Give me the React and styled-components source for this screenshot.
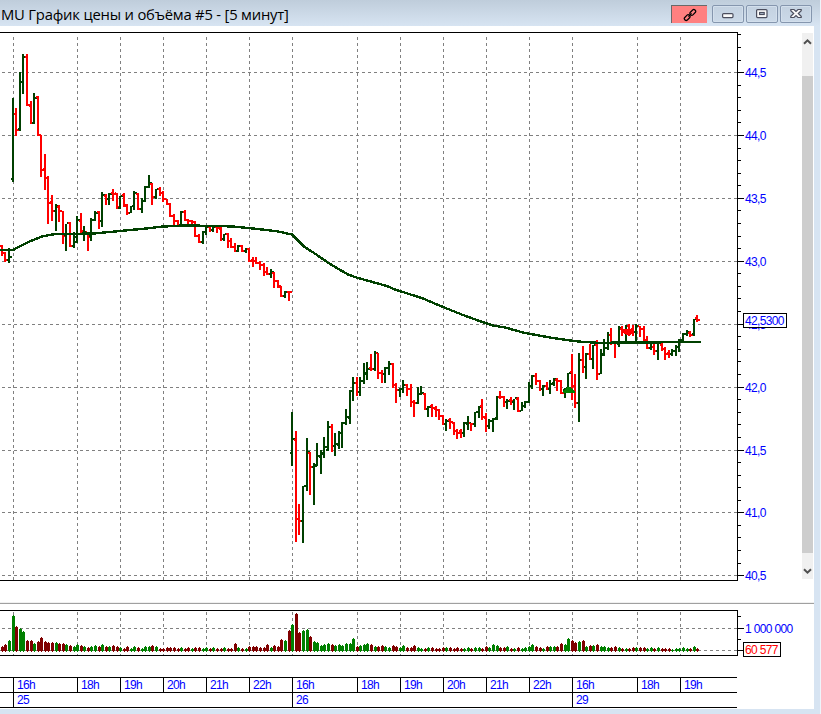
import styled, { createGlobalStyle } from "styled-components";

const UP = "#004000";
const DOWN = "#ff0000";
const STEP = 3.585;

// each session: [x of the first bar, bars as "high low open close"]
const sessions = [
  {
    x: 1.35,
    bars: `245 256 246 253,252 262 253 260,248 263 260 257`,
    volume: `r6 r8 g12`,
  },
  {
    x: 12.1,
    bars: `98 182 179 114,108 136 114 130,72 131 129 82,54 94 82 57,54 106 57 105,101 124 106 123,93 124 123 98,
96 136 97 135,135 177 135 170,154 190 169 178,176 224 178 203,195 221 202 211,204 231 211 206,205 222 207 211,
211 244 211 236,224 251 235 223,222 247 223 246,232 248 246 237,216 243 242 220,213 233 221 231,226 241 233 232,
232 251 232 237,218 241 236 220,211 221 220 213,211 229 212 221,192 227 221 195,194 205 196 199,193 205 199 194,
189 201 193 194,193 209 193 207,196 209 208 196,193 207 195 205,204 215 206 213,206 213 213 206,191 210 206 193,
193 210 194 209,198 213 209 201,186 202 201 187,175 188 187 183,183 205 184 197,189 199 197 189,187 196 189 193,
191 202 193 199,199 205 199 204,203 217 204 216,214 225 216 221,220 226 221 225,211 226 225 212,210 221 212 220,
219 226 220 221,220 227 221 222,221 237 222 236,234 243 236 242,231 244 242 232,226 235 232 227,226 232 227 230,
227 232 230 227,226 233 227 228,227 241 229 239,234 241 239 234,233 248 234 241,238 248 241 247,243 252 247 251,
245 252 251 246,245 252 246 251,248 253 251 249,248 262 249 261,257 267 260 261,257 264 261 263,261 270 263 265,
263 276 265 272,267 275 272 274,269 278 274 272,272 288 273 281,280 288 281 286,286 297 287 296,291 298 296 292,
291 301 292 292`,
    volume: `g37 r26 g24 g21 r12 r12 g9 r11 r15 r11 r10 r10 g10 r9 r9 g8 r7 g6 g8 r7 g6 r5 g6 g7 r6 g8 r6 g6 r7 r6
g5 r4 r6 g4 g6 r5 g4 g6 g6 r7 g6 r4 r4 r5 r5 r5 r4 g5 r4 r5 g4 r5 r5 g4 g5 r4 g5 r4 r4 g5 r4 r4 r9 g5 r4 g4 r6 r6
r6 r5 r5 r8 g5 r7 r6 r13 g12 r22`,
  },
  {
    x: 291.7,
    bars: `412 466 453 439,431 542 440 519,504 535 519 521,486 543 521 486,438 491 486 452,452 495 453 467,
463 505 467 466,443 466 465 456,450 474 457 453,437 458 454 447,421 451 450 427,424 452 427 446,433 456 446 444,
431 449 445 433,422 448 433 423,409 425 423 417,390 424 418 391,377 401 391 383,377 396 383 392,377 396 392 381,
363 384 381 373,362 380 374 369,354 371 368 369,351 371 369 353,353 379 353 373,370 383 373 374,367 383 374 368,
361 375 368 364,363 388 364 385,383 403 385 390,388 397 390 389,380 393 389 385,384 396 385 389,384 407 389 402,
400 417 402 403,387 404 403 394,386 395 394 393,393 410 394 409,406 417 409 407,404 417 406 408,406 417 409 410,
409 420 410 416,415 425 416 424,419 431 424 421,418 429 420 422,422 435 423 431,429 439 431 433,429 438 431 433,
422 437 433 423,416 430 424 423,423 431 423 424,412 427 424 412,406 418 412 407,399 420 406 417,413 432 418 426,
419 429 426 421,418 432 421 419,396 420 418 397,391 399 397 397,396 407 397 402,399 409 402 401,397 405 400 401,
399 410 402 398,397 412 399 411,402 411 411 406,401 408 406 402,382 403 402 386,375 389 386 376,373 385 376 381,
380 391 381 389,385 396 389 386,382 390 386 389,380 394 389 384,378 386 383 379,378 391 380 381,380 394 381 393,
388 398 390 389,373 390 388 373`,
    volume: `g28 r39 r20 g22 g23 r16 g11 g10 g7 g8 g9 r8 g7 g8 g7 g9 g9 g14 r6 g7 g8 g9 r8 g6 r6 r7 g6 g5 r7 r6 g5
g7 r5 r5 r7 g5 g4 r4 g5 r5 r4 r4 r5 g5 r5 r4 r5 r4 g4 g5 r4 g5 g5 r4 r6 g5 g8 g7 r5 r5 g6 r4 g4 r5 g4 g5 g6 g8 r6
r5 g4 r6 g6 g6 r6 r9 g8 g14`,
  },
  {
    x: 571.4,
    bars: `354 400 372 386,374 408 386 403,353 422 403 360,346 373 360 367,353 379 367 354,344 360 354 359,
345 369 359 345,340 380 345 374,349 374 374 354,339 356 355 348,332 350 348 335,328 345 335 342,343 358 342 343,
326 347 344 328,326 336 329 332,325 342 332 326,324 336 326 333,325 336 329 332,324 342 332 326,326 337 326 329,
326 343 329 340,336 349 341 348,342 350 348 347,344 355 347 351,342 360 351 343,343 351 345 349,347 360 349 354,
350 358 353 354,349 356 354 351,345 356 351 347,339 352 347 340,333 342 340 334,330 336 334 332,331 337 333 335,
319 336 334 319,315 322 318 320`,
    volume: `r12 r10 g11 r12 g6 r7 g7 r8 g6 g6 g5 r5 r6 g5 r4 g4 r4 r5 g5 r5 r5 g4 g5 r4 g5 r4 r4 r4 g3 g4 g4 g5 g4
r4 g6 r4`,
  },
];

const average =
  "0,250 13,250 25,243.7 33,240 42,236.5 55,234 93,233.6 120,231 148,228.3 163,226.5 187,225.5 218,226 233,226.5 255,228.7 277,231.3 292,234.5 304,246.5 317,255 330,264 348,274.5 358,278 387,286 395,289.5 423,298.5 443,307 463,315 481,321.5 493,325.5 505,327.5 525,333 553,338 578,341.5 600,343 622,342.4 701,342.2";

const gridX = [13, 77, 120, 163, 206, 249, 292, 357, 400, 443, 486, 529, 572, 637, 680];
const priceLevels = [
  [72, "44,5"],
  [135, "44,0"],
  [198, "43,5"],
  [261, "43,0"],
  [324, "42,5"],
  [387, "42,0"],
  [450, "41,5"],
  [512, "41,0"],
  [575, "40,5"],
];
const minorTicks = Array.from({ length: 44 }, (_, i) => Math.round(34.4 + i * 12.575)).filter(
  (y) => y < 580 && !priceLevels.some(([level]) => Math.abs(level - y) < 3)
);

const hours = [
  [64, "16h"],
  [43, "18h"],
  [43, "19h"],
  [43, "20h"],
  [43, "21h"],
  [43, "22h"],
  [65, "16h"],
  [43, "18h"],
  [43, "19h"],
  [43, "20h"],
  [43, "21h"],
  [43, "22h"],
  [65, "16h"],
  [43, "18h"],
  [57, "19h"],
];
const days = [
  [279, "25"],
  [280, "26"],
  [165, "29"],
];

const Bar = ({ x, data }) => {
  const [high, low, open, close] = data.trim().split(" ").map(Number);
  const down = close >= open;
  return (
    <g fill={down ? DOWN : UP}>
      <rect x={x} y={high} width="2" height={low - high} />
      <rect x={x - 1} y={open - 1} width="1" height="2" />
      <rect x={x + 2} y={close - 1} width="2" height="2" />
    </g>
  );
};

const VolumeBar = ({ x, data }) => {
  const h = Number(data.slice(1));
  return (
    <g fill={data[0] === "g" ? "#008000" : "#800000"}>
      <rect x={x} y={652 - h + 1} width="3" height={h - 2} />
      <rect x={x + 1} y={652 - h} width="1" height={h} />
    </g>
  );
};

const PriceChart = () => (
  <Plot width="802" height="576" viewBox="0 26 802 576">
    <g stroke="#808080" strokeDasharray="3 3">
      {gridX.map((x) => (
        <path key={x} d={`M${x + 0.5} 37V580`} />
      ))}
      {priceLevels.map(([y]) => (
        <path key={y} d={`M2 ${y + 0.5}H737`} />
      ))}
    </g>
    {sessions.map((s) =>
      s.bars.split(",").map((b, i) => <Bar key={`${s.x}-${i}`} x={Math.floor(s.x + i * STEP)} data={b} />)
    )}
    <path d="M563 393V391L567 387H570L575 391V393Z" fill="#008000" />
    <path d="M622 329H634V332L630 335H627L622 332Z" fill={DOWN} />
    <polyline points={average} fill="none" stroke={UP} strokeWidth="2.4" />
    <path d="M0 32.5H737.5V580.5H0" fill="none" stroke="#000" />
    {minorTicks.map((y) => (
      <path key={y} d={`M738 ${y + 0.5}h3`} stroke="#000" />
    ))}
    {priceLevels.map(([y, label]) => (
      <g key={y}>
        <path d={`M738 ${y + 0.5}h6`} stroke="#000" />
        <Label x="745" y={y + 5}>
          {label}
        </Label>
      </g>
    ))}
    <rect x="743.5" y="313.5" width="43" height="14" fill="#fff" stroke="#000" />
    <Label x="745" y="325">
      42,5300
    </Label>
  </Plot>
);

const VolumeChart = () => (
  <Plot width="814" height="73" viewBox="0 604 814 73">
    <g stroke="#808080" strokeDasharray="3 3">
      {gridX.map((x) => (
        <path key={x} d={`M${x + 0.5} 612V655`} />
      ))}
      <path d="M2 628.5H737" />
      <path d="M2 650.5H737" />
    </g>
    <path d="M0 650.5H700" stroke="#808080" />
    {sessions.map((s) =>
      s.volume
        .split(/\s+/)
        .map((v, i) => <VolumeBar key={`${s.x}-${i}`} x={Math.floor(s.x + i * STEP)} data={v} />)
    )}
    <path d="M0 610.5H737.5V655.5H0" fill="none" stroke="#000" />
    <path d="M738 616.5h3M738 628.5h6M738 639.5h3M738 650.5h6" stroke="#000" />
    <Label x="745" y="633">
      1 000 000
    </Label>
    <rect x="743.5" y="642.5" width="37" height="14" fill="#fff" stroke="#000" />
    <Label x="745" y="654" $alert>
      60 577
    </Label>
  </Plot>
);

export default function App() {
  return (
    <Window>
      <Global />
      <TitleBar>
        <Title>MU График цены и объёма #5 - [5 минут]</Title>
        <Buttons>
          <LinkButton>
            <svg width="14" height="14" viewBox="0 0 14 14" fill="none" stroke="#000" strokeWidth="1.2">
              <rect x="6.6" y="2.6" width="6.4" height="3.6" rx="1.6" transform="rotate(-45 9.8 4.4)" />
              <rect x="1" y="7.8" width="6.4" height="3.6" rx="1.6" transform="rotate(-45 4.2 9.6)" />
              <path d="M5.4 8.6L8.6 5.4" />
            </svg>
          </LinkButton>
          <WindowButton>
            <svg width="12" height="12" viewBox="0 0 12 12">
              <rect x=".6" y="5.6" width="10.4" height="4" rx="1" fill="#fafafa" stroke="#4b4e5e" strokeWidth="1.2" />
            </svg>
          </WindowButton>
          <WindowButton>
            <svg width="12" height="12" viewBox="0 0 12 12">
              <rect x=".6" y="1.6" width="10.4" height="8" rx="1" fill="#fafafa" stroke="#4b4e5e" strokeWidth="1.2" />
              <rect x="3.6" y="4.5" width="4.6" height="2" fill="#b7c7d8" stroke="#4b4e5e" strokeWidth="1.2" />
            </svg>
          </WindowButton>
          <WindowButton>
            <svg width="12" height="12" viewBox="0 0 12 12">
              <path
                d="M.8 1.5H4L6 3.4 8 1.5H11.2V2.7L8.3 5.5 11.2 8.3V9.5H8L6 7.6 4 9.5H.8V8.3L3.7 5.5.8 2.7Z"
                fill="#fafafa"
                stroke="#4b4e5e"
                strokeWidth="1.2"
              />
            </svg>
          </WindowButton>
        </Buttons>
      </TitleBar>
      <Content>
        <PricePane>
          <PriceChart />
          <Scrollbar>
            <Arrow />
            <Thumb />
            <Arrow $down />
          </Scrollbar>
        </PricePane>
        <Splitter />
        <VolumeChart />
        <TimeAxis>
          <TimeRow>
            {hours.map(([w, text], i) => (
              <TimeCell key={i} $w={w}>
                {text}
              </TimeCell>
            ))}
          </TimeRow>
          <TimeRow>
            {days.map(([w, text]) => (
              <TimeCell key={text} $w={w}>
                {text}
              </TimeCell>
            ))}
          </TimeRow>
        </TimeAxis>
      </Content>
    </Window>
  );
}

const Arrow = ({ $down }) => (
  <ArrowBox $down={$down}>
    <svg width="9" height="7" viewBox="0 0 9 7" fill="none" stroke="#505050" strokeWidth="2">
      <path d={$down ? "M1 1.2L4.5 4.7 8 1.2" : "M1 5.8L4.5 2.3 8 5.8"} />
    </svg>
  </ArrowBox>
);

const Global = createGlobalStyle`
  body {
    margin: 0;
    background: #d7e4f2;
    overflow: hidden;
  }
`
const Window = styled.div`
  box-sizing: border-box;
  width: 821px;
  height: 714px;
  border-right: 1px solid #eef4fa;
  background: #d7e4f2;
  font-family: "Liberation Sans", sans-serif;
`
const TitleBar = styled.header`
  display: flex;
  justify-content: space-between;
  align-items: center;
  box-sizing: border-box;
  height: 26px;
  padding: 3px 8px 1px 1px;
  background: linear-gradient(#bfcddb, #d7e4f2);
`
const Title = styled.h1`
  margin: 0;
  font-family: "Open Sans", "Noto Sans", sans-serif;
  font-size: 14.8px;
  letter-spacing: -.2px;
  font-weight: 400;
  line-height: 20px;
  color: #000;
  white-space: nowrap;
`
const Buttons = styled.div`
  display: flex;
  gap: 2px;
`
const WindowButton = styled.button`
  display: flex;
  align-items: center;
  justify-content: center;
  box-sizing: border-box;
  width: 32px;
  height: 18px;
  padding: 0;
  border: 1px solid #8596ae;
  border-radius: 2px;
  background: linear-gradient(#c3d1e0, #cbd9e8);
  box-shadow: inset 0 0 0 1px #d3dfec;
`
const LinkButton = styled(WindowButton)`
  width: 36px;
  margin-right: 3px;
  border: 0;
  border-top: 1px solid #696969;
  border-left: 1px solid #696969;
  border-radius: 0;
  background: #ff8080;
  box-shadow: none;
`
const Content = styled.main`
  width: 814px;
  height: 683px;
  background: #fff;
`
const PricePane = styled.section`
  display: flex;
  height: 576px;
`
const Plot = styled.svg`
  display: block;
  flex: none;
  shape-rendering: crispEdges;
`
const Label = styled.text`
  font-family: "Liberation Sans", sans-serif;
  font-size: 12px;
  letter-spacing: -.65px;
  fill: ${({ $alert }) => ($alert ? "#ff0000" : "#0000ff")};
`
const Scrollbar = styled.div`
  display: flex;
  flex-direction: column;
  width: 11px;
  height: 546px;
  margin-top: 7px;
  background: #f0f0f0;
`
const ArrowBox = styled.div`
  display: flex;
  align-items: center;
  justify-content: center;
  height: ${({ $down }) => ($down ? "26px" : "43px")};
  padding-bottom: ${({ $down }) => ($down ? "0" : "26px")};
  padding-top: ${({ $down }) => ($down ? "11px" : "0")};
  box-sizing: border-box;
`
const Thumb = styled.div`
  height: 477px;
  background: #cdcdcd;
`
const Splitter = styled.div`
  height: 1px;
  border-top: 1px solid #f0f0f0;
  background: #a0a0a0;
`
const TimeAxis = styled.footer`
  width: 737px;
  border-bottom: 1px solid #000;
`
const TimeRow = styled.div`
  display: flex;
  box-sizing: border-box;
  height: 15px;
  padding-left: 13px;
  border-top: 1px solid #000;
`
const TimeCell = styled.div`
  box-sizing: border-box;
  flex: none;
  width: ${({ $w }) => $w}px;
  padding-left: 3px;
  border-left: 1px solid #000;
  font-size: 12px;
  line-height: 15px;
  letter-spacing: -.7px;
  color: #0000ff;
`
